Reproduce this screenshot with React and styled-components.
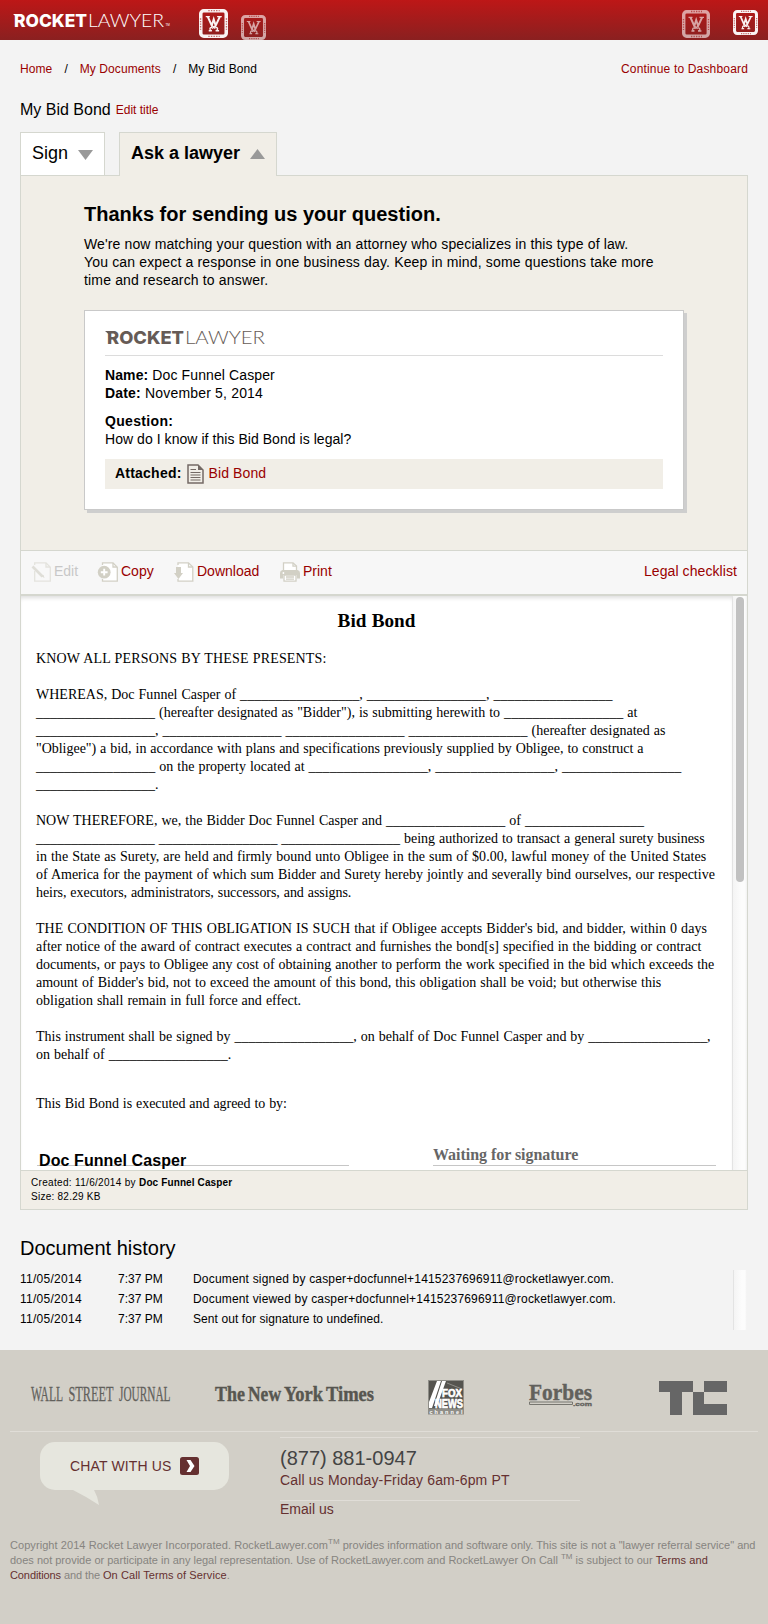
import React from "react";
import styled, { createGlobalStyle } from "styled-components";

const sans = `"Liberation Sans", Arial, Helvetica, sans-serif`;
const serif = `"Liberation Serif", "Times New Roman", serif`;

const Global = createGlobalStyle`
  * { box-sizing: border-box; }
  body { margin: 0; background: #f3f3f3; color: #000; font: 14px/18px ${sans}; }
  h1, h2, p, ul, dl, dd { margin: 0; padding: 0; }
  a { color: #990000; text-decoration: none; }
  svg { display: block; flex: none; overflow: visible; }
`;

const Page = styled.div`
  width: 768px;
  min-height: 1624px;
  display: flex;
  flex-direction: column;
`;

const Header = styled.header`
  height: 40px;
  display: flex;
  align-items: flex-start;
  background: linear-gradient(#bd1717, #8a2020);
`;

const HeaderLogo = styled.div`
  margin: 11px 0 0 13px;
  width: 186px;
`;

const EmblemBox = styled.div`
  margin-top: ${(p) => p.$top}px;
  margin-left: ${(p) => p.$left};
  margin-right: ${(p) => p.$right || 0}px;
  opacity: ${(p) => (p.$faded ? 0.6 : 0.95)};
`;

const Main = styled.main`
  margin: 0 20px;
`;

const Breadcrumbs = styled.nav`
  display: flex;
  margin-top: 20px;
  font-size: 12px;
  line-height: 18px;
  letter-spacing: 0.08px;
  span { margin: 0 11.8px 0 12.2px; }
`;

const DashboardLink = styled.a`
  margin-left: auto;
  letter-spacing: 0.17px;
`;

const TitleRow = styled.div`
  display: flex;
  align-items: baseline;
  gap: 5px;
  height: 20px;
  margin-top: 22px;
  font-size: 16px;
  line-height: 20px;
  a { font-size: 12px; position: relative; top: -1px; }
`;

const Tabs = styled.div`
  display: flex;
  gap: 14px;
  height: 43px;
  margin-top: 12px;
`;

const Tab = styled.div`
  display: flex;
  justify-content: space-between;
  position: relative;
  width: ${(p) => p.$width}px;
  height: ${(p) => (p.$active ? 44 : 43)}px;
  padding: 9px 11px 0;
  border: 1px solid #d5d7cf;
  border-bottom: 0;
  background: ${(p) => (p.$active ? "#f1eee7" : "#fff")};
  font-size: 18px;
  line-height: 22px;
  font-weight: ${(p) => (p.$active ? "bold" : "normal")};
  svg { margin-top: ${(p) => (p.$active ? 7 : 8)}px; }
`;

const Panel = styled.section`
  border: 1px solid #d5d7cf;
`;

const Confirmation = styled.div`
  height: 374px;
  padding: 26px 63px 0;
  background: #f1eee7;
`;

const Message = styled.p`
  margin-top: 9px;
`;

const Heading = styled.h1`
  font-size: 20px;
  line-height: 24px;
  font-weight: bold;
`;

const Card = styled.article`
  width: 600px;
  height: 200px;
  margin-top: 21px;
  padding: 17px 20px 0;
  border: 1px solid #c9c9c9;
  background: #fff;
  box-shadow: 3px 3px 0 #cecece;
`;

const CardLogo = styled.div`
  height: 28px;
  border-bottom: 1px solid #dcdcdc;
`;

const Fields = styled.div`
  padding-top: 10px;
`;

const Attachment = styled.div`
  display: flex;
  align-items: center;
  height: 30px;
  margin-top: 11px;
  padding: 0 10px 2px;
  background: #f1eee7;
  letter-spacing: 0.1px;
  b { letter-spacing: 0.22px; }
  svg { margin: 2px 5px 0 5px; }
`;

const Toolbar = styled.div`
  display: flex;
  align-items: center;
  height: 46px;
  padding: 0 10px 4px;
  border-top: 1px solid #d5d7cf;
  border-bottom: 2px solid #d5d7cf;
  background: #f7f7f7;
`;

const Tool = styled.a`
  display: flex;
  align-items: center;
  gap: 3px;
  width: ${(p) => p.$width}px;
  opacity: ${(p) => (p.$disabled ? 0.5 : 1)};
  color: ${(p) => (p.$disabled ? "#999" : "#990000")};
  svg { margin-top: 3px; }
`;

const ChecklistLink = styled.a`
  margin-left: auto;
  letter-spacing: 0.08px;
`;

const DocumentView = styled.div`
  display: flex;
  height: 574px;
  overflow: hidden;
  background: #fff;
`;

const Sheet = styled.div`
  width: 711px;
  padding: 13px 15px 0;
  box-shadow: inset 0 4px 4px -2px #ddd;
  font-family: ${serif};
  word-spacing: 0.5px;
`;

const SheetTitle = styled.h2`
  font-size: 19.2px;
  line-height: 24px;
  font-weight: bold;
  text-align: center;
  margin: 0 0 17px;
`;

const Clause = styled.p`
  margin-bottom: ${(p) => p.$after ?? 18}px;
`;

const Line = styled.span`
  display: block;
  white-space: nowrap;
  letter-spacing: ${(p) => p.$track || 0}px;
`;

const Tracked = styled.span`
  letter-spacing: ${(p) => p.$track}px;
`;

const Signatures = styled.div`
  display: flex;
  justify-content: space-between;
  margin: 0 1px;
`;

const Signature = styled.div`
  display: flex;
  align-items: flex-end;
  width: ${(p) => p.$width}px;
  height: 53px;
  border-bottom: 1px solid #c6c6c6;
  font-size: 16px;
  line-height: 18px;
  font-weight: bold;
  word-spacing: 0;
`;

const SignedName = styled.span`
  margin: 0 0 -5px 2px;
  font-family: ${sans};
  letter-spacing: 0.09px;
`;

const Pending = styled.span`
  margin-bottom: 1px;
  color: #666;
  letter-spacing: -0.04px;
`;

const Track = styled.div`
  width: ${(p) => p.$width}px;
  height: ${(p) => p.$height};
  padding: 1px 0 0 3px;
  border-left: 1px solid #e3e3e3;
  background: linear-gradient(90deg, #f4f4f4, #fcfcfc 60%, #fcfcfc 85%, #f1f1f1);
`;

const Thumb = styled.div`
  width: 8px;
  height: 285px;
  border-radius: 4px;
  background: #c1c1c1;
`;

const FileInfo = styled.div`
  height: 39px;
  padding: 5px 10px 0;
  border-top: 1px solid #d5d7cf;
  background: #f1eee7;
  font-size: 10px;
  line-height: 14px;
`;

const HistoryTitle = styled.h2`
  margin: 26px 0 10px;
  font-size: 20px;
  line-height: 24px;
  font-weight: normal;
`;

const History = styled.div`
  display: flex;
  justify-content: space-between;
  height: 60px;
  margin-right: 1px;
  font-size: 12px;
`;

const HistoryRow = styled.div`
  display: grid;
  grid-template-columns: 98px 75px auto;
  height: 20px;
  line-height: 18px;
  white-space: nowrap;
`;

const Footer = styled.footer`
  flex: 1;
  margin-top: 20px;
  padding: 0 10px;
  background: #d2cfc7;
  color: #868480;
  a { color: #653030; }
`;

const Press = styled.div`
  display: flex;
  align-items: flex-start;
  height: 82px;
  padding: 29px 0 0 20px;
  border-bottom: 1px solid #e0ddd7;
`;

const PressLogo = styled.div`
  width: ${(p) => p.$width}px;
`;

const Contact = styled.div`
  display: flex;
  height: 94px;
  padding: 5px 0 0 30px;
`;

const Chat = styled.div`
  position: relative;
  display: flex;
  align-items: center;
  width: 189px;
  height: 48px;
  margin: 5px 51px 0 0;
  padding: 0 30px 0;
  gap: 8px;
  border-radius: 15px;
  background: #e6e6de;
  color: #653030;
  letter-spacing: 0.15px;
  white-space: nowrap;
`;

const Tail = styled.svg`
  position: absolute;
  left: 33px;
  top: 48px;
`;

const ContactInfo = styled.div`
  width: 300px;
  border-top: 1px solid #e0ddd7;
  line-height: 18px;
`;

const Phone = styled.div`
  margin-top: 8px;
  color: #444;
  font-size: 20px;
  line-height: 24px;
`;

const CallHours = styled.div`
  height: 31px;
  margin-bottom: -1px;
  padding-top: 1px;
  border-bottom: 1px solid #e0ddd7;
  letter-spacing: 0.15px;
`;

const Legal = styled.p`
  margin: 12px 0 0;
  font-size: 11px;
  line-height: 15px;
  sup { font-size: 8px; line-height: 0; vertical-align: 5px; }
`;

function Wordmark({ color, left = 1, trademark, boldWidth, lightWidth }) {
  return (
    <svg width="166" height="20" fill={color}>
      <path d="M0 3h5v3H3.5z" />
      <text x={left + 1} y="16" fontFamily="Inter" fontWeight="800" fontSize="18" textLength={boldWidth} lengthAdjust="spacingAndGlyphs">ROCKET</text>
      <text x={left + boldWidth + 2} y="16" fontFamily="Lato" fontWeight="300" fontSize="18.2" textLength={lightWidth} lengthAdjust="spacingAndGlyphs">LAWYER</text>
      {trademark && <text x="152.5" y="15" fontFamily="Liberation Sans" fontSize="3">TM</text>}
    </svg>
  );
}

function Emblem({ size }) {
  return (
    <svg width={size} height={size} viewBox="0 0 28 28" fill="none" stroke="#fff">
      <rect x="1.7" y="1.7" width="24.6" height="24.6" rx="3" strokeWidth="3.4" />
      <path d="M9 1.5h11M9 26.5h11M1.5 9v11M26.5 9v11" stroke="#a51b1b" strokeWidth="1.3" strokeDasharray="1.3 1.2" opacity=".65" />
      <path d="M6.5 7.3h4M17.5 7.3h4.5" strokeWidth="1.2" />
      <path d="M8.500 7.500l3.800 8.500 1.900-6 1.900 6 4-8.500" strokeWidth="1.9" />
      <path d="M12.400 16l3.200 2.800M16.200 16l-3.600 2.800M12.500 17.800c-2.600 0-2.600 3 0 3.200M16 17.800c2.600 0 2.600 3 0 3.200M9.400 21h2.400M16.800 21h2.600" strokeWidth="1.3" />
    </svg>
  );
}

const Arrow = ({ up }) => (
  <svg width="15" height="10" fill="#999"><path d={up ? "M0 10h15L7.5 0z" : "M0 0h15L7.5 10z"} /></svg>
);

const FileIcon = () => (
  <svg width="17" height="20" fill="none" stroke="#746a65">
    <path d="M1 1h10l5 5v13H1z" fill="#f1eee7" strokeWidth="1.5" />
    <path d="M11 1v5h5z" fill="#746a65" stroke="none" />
    <path d="M3.5 5.5H9M3.5 8.5h10M3.5 11h10M3.5 13.5h10M3.5 16h10" strokeWidth="1.2" />
  </svg>
);

function ToolIcon({ kind }) {
  return (
    <svg width="20" height="20" fill="none" stroke="#d2d0c5" strokeWidth="1.3">
      {kind === "edit" && <><path d="M3.7 3V.8H15l4.3 4.4v14H3.7V9" fill="#fafafa" /><path d="M15 1v4h4" /><path d="M1.5 4.5l10 10" stroke="#c8c6ba" strokeWidth="2.6" /><path d="M10.5 14.5l3 1.5-1-3.2z" fill="#c8c6ba" stroke="none" /></>}
      {kind === "copy" && <><path d="M4.5 3V.8H15l4.3 4.4v14H4.5V17" fill="#fff" /><path d="M15 1v4h4" /><circle cx="6.2" cy="10.2" r="6.4" fill="#d2d0c5" stroke="none" /><path d="M6.2 6.8v6.8M2.8 10.2h6.8" stroke="#fff" strokeWidth="1.9" /></>}
      {kind === "download" && <><path d="M4 3V.8h10.5L18.8 5v14.2H4V17" fill="#fff" /><path d="M14.5 1v4h4" /><path d="M2 5h5v6h2l-4.5 6L0 11h2z" fill="#d2d0c5" stroke="none" /></>}
      {kind === "print" && <><path d="M3.5 9V.8H13L16.5 4v5" fill="#fff" /><path d="M13 1v3.2h3.5" /><path d="M2.5 8h15Q20 8.500 20 11v5.500h-3V13H3v3.500H0V11Q0 8.500 2.500 8z" fill="#d2d0c5" stroke="none" /><circle cx="3.4" cy="11" r=".9" fill="#fff" stroke="none" /><path d="M4 13h12v6.200H4z" fill="#fff" /><path d="M6 15h8M6 17.200h8" /></>}
    </svg>
  );
}

const B = "_".repeat(17);

const clauses = [
  { lines: [["KNOW ALL PERSONS BY THESE PRESENTS:", 0.15]] },
  { lines: [
    [`WHEREAS, Doc Funnel Casper of ${B}, ${B}, ${B}`, 0.007],
    [`${B} (hereafter designated as "Bidder"), is submitting herewith to ${B} at`, 0.005],
    [`${B}, ${B} ${B} ${B} (hereafter designated as`],
    [`"Obligee") a bid, in accordance with plans and specifications previously supplied by Obligee, to construct a`, -0.026],
    [`${B} on the property located at ${B}, ${B}, ${B}`, 0.012],
    [`${B}.`],
  ] },
  { lines: [
    [`NOW THEREFORE, we, the Bidder Doc Funnel Casper and ${B} of ${B}`, 0.008],
    [`${B} ${B} ${B} being authorized to transact a general surety business`, -0.018],
    ["in the State as Surety, are held and firmly bound unto Obligee in the sum of $0.00, lawful money of the United States", 0.022],
    ["of America for the payment of which sum Bidder and Surety hereby jointly and severally bind ourselves, our respective"],
    ["heirs, executors, administrators, successors, and assigns.", -0.05],
  ] },
  { lines: [
    ["THE CONDITION OF THIS OBLIGATION IS SUCH that if Obligee accepts Bidder's bid, and bidder, within 0 days", 0.046],
    ["after notice of the award of contract executes a contract and furnishes the bond[s] specified in the bidding or contract", 0.007],
    ["documents, or pays to Obligee any cost of obtaining another to perform the work specified in the bid which exceeds the", -0.014],
    ["amount of Bidder's bid, not to exceed the amount of this bond, this obligation shall be void; but otherwise this"],
    ["obligation shall remain in full force and effect.", 0.012],
  ] },
  { after: 31, lines: [
    [`This instrument shall be signed by ${B}, on behalf of Doc Funnel Casper and by ${B},`, -0.012],
    [`on behalf of ${B}.`],
  ] },
  { after: 0, lines: [["This Bid Bond is executed and agreed to by:", -0.045]] },
];

const events = [
  ["Document signed by casper+docfunnel+1415237696911@rocketlawyer.com.", 0.18],
  ["Document viewed by casper+docfunnel+1415237696911@rocketlawyer.com.", 0.18],
  ["Sent out for signature to undefined.", 0.08],
];

function PressLogos() {
  return (
    <Press>
      <PressLogo $width={184}>
        <svg width="142" height="36" fill="#62615c" stroke="#62615c" strokeWidth=".3" fontFamily="Liberation Serif" fontSize="21.5">
          <text x="1" y="22" textLength="32" lengthAdjust="spacingAndGlyphs">WALL</text>
          <text x="38.500" y="22" textLength="45" lengthAdjust="spacingAndGlyphs">STREET</text>
          <text x="89" y="22" textLength="51.500" lengthAdjust="spacingAndGlyphs">JOURNAL</text>
        </svg>
      </PressLogo>
      <PressLogo $width={214}>
        <svg width="162" height="36" fill="#575650" stroke="#575650" strokeWidth=".4" fontFamily="Liberation Serif" fontWeight="bold" fontSize="21">
          <text x="1" y="22" textLength="30" lengthAdjust="spacingAndGlyphs">The</text>
          <text x="34" y="22" textLength="33" lengthAdjust="spacingAndGlyphs">New</text>
          <text x="70" y="22" textLength="39" lengthAdjust="spacingAndGlyphs">York</text>
          <text x="112" y="22" textLength="48" lengthAdjust="spacingAndGlyphs">Times</text>
        </svg>
      </PressLogo>
      <PressLogo $width={101}>
        <svg width="36" height="36" fontFamily="Liberation Sans" fontWeight="bold">
          <path d="M0 1h36v34.500H0z" fill="#8f8e88" />
          <path d="M1 2h34v27.500H1z" fill="#55544f" />
          <path d="M1 23L9 2h4L4 29H1zM6 27L14 2h4L9 27z" fill="#fff" />
          <path d="M19 4l15 6" stroke="#8f8e88" />
          <g fill="#fff" stroke="#fff" strokeWidth=".7">
            <text x="14" y="18" fontSize="11.500" textLength="20" lengthAdjust="spacingAndGlyphs">FOX</text>
            <text x="7" y="28.500" fontSize="12" textLength="28" lengthAdjust="spacingAndGlyphs">NEWS</text>
          </g>
          <text x="1.500" y="34.500" fontSize="5.500" fill="#fff" textLength="33" lengthAdjust="spacing">channel</text>
        </svg>
      </PressLogo>
      <PressLogo $width={130}>
        <svg width="64" height="36" fill="#62615c" fontWeight="bold">
          <text x="0" y="21" fontFamily="Liberation Serif" fontSize="23" textLength="63" lengthAdjust="spacingAndGlyphs" stroke="#62615c" strokeWidth=".4">Forbes</text>
          <path d="M.5 23h43v2.500H.5z" fill="none" stroke="#777670" />
          <text x="44" y="26.500" fontFamily="Liberation Sans" fontSize="6" textLength="19" lengthAdjust="spacingAndGlyphs" stroke="#62615c" strokeWidth=".3">.com</text>
        </svg>
      </PressLogo>
      <svg width="68" height="36" fill="#666">
        <path d="M0 2h34v11H23v23H11V13H0zM45 2h23v11H45zM34 13h11v12h23v11H34z" />
      </svg>
    </Press>
  );
}

export default function App() {
  return (
    <Page>
      <Global />
      <Header>
        <HeaderLogo><Wordmark color="#fff" left={0} boldWidth={73} lightWidth={76} trademark /></HeaderLogo>
        <EmblemBox $top={9} $left="0"><Emblem size={29} /></EmblemBox>
        <EmblemBox $top={15} $left="13px" $faded><Emblem size={25} /></EmblemBox>
        <EmblemBox $top={10} $left="auto" $faded><Emblem size={28} /></EmblemBox>
        <EmblemBox $top={10} $left="23px" $right={10}><Emblem size={25} /></EmblemBox>
      </Header>

      <Main>
        <Breadcrumbs>
          <a href="#home">Home</a><span>/</span>
          <a href="#documents">My Documents</a><span>/</span>
          My Bid Bond
          <DashboardLink href="#dashboard">Continue to Dashboard</DashboardLink>
        </Breadcrumbs>
        <TitleRow>My Bid Bond<a href="#edit-title">Edit title</a></TitleRow>

        <Tabs>
          <Tab $width={85}>Sign<Arrow /></Tab>
          <Tab $width={158} $active>Ask a lawyer<Arrow up /></Tab>
        </Tabs>

        <Panel>
          <Confirmation>
            <Heading>Thanks for sending us your question.</Heading>
            <Message>
              <Line $track={0.13}>We're now matching your question with an attorney who specializes in this type of law.</Line>
              <Line $track={0.157}>You can expect a response in one business day. Keep in mind, some questions take more</Line>
              <Line $track={0.16}>time and research to answer.</Line>
            </Message>
            <Card>
              <CardLogo><Wordmark color="#665b56" boldWidth={77} lightWidth={80} /></CardLogo>
              <Fields>
                <Line $track={0.11}><b>Name:</b> Doc Funnel Casper</Line>
                <Line $track={0.18}><b>Date:</b> November 5, 2014</Line>
              </Fields>
              <Fields>
                <Line $track={0.33}><b>Question:</b></Line>
                <Line $track={0.05}>How do I know if this Bid Bond is legal?</Line>
              </Fields>
              <Attachment><b>Attached:</b><FileIcon /><a href="#bid-bond">Bid Bond</a></Attachment>
            </Card>
          </Confirmation>

          <Toolbar>
            <Tool $width={67} $disabled><ToolIcon kind="edit" />Edit</Tool>
            <Tool $width={76} href="#copy"><ToolIcon kind="copy" />Copy</Tool>
            <Tool $width={106} href="#download"><ToolIcon kind="download" />Download</Tool>
            <Tool $width={60} href="#print"><ToolIcon kind="print" />Print</Tool>
            <ChecklistLink href="#checklist">Legal checklist</ChecklistLink>
          </Toolbar>

          <DocumentView>
            <Sheet>
              <SheetTitle>Bid Bond</SheetTitle>
              {clauses.map((c, i) => (
                <Clause key={i} $after={c.after}>
                  {c.lines.map(([text, track], j) => <Line key={j} $track={track}>{text}</Line>)}
                </Clause>
              ))}
              <Signatures>
                <Signature $width={312}><SignedName>Doc Funnel Casper</SignedName></Signature>
                <Signature $width={283}><Pending>Waiting for signature</Pending></Signature>
              </Signatures>
            </Sheet>
            <Track $width={15} $height="574px"><Thumb /></Track>
          </DocumentView>

          <FileInfo>
            <Line $track={0.32}>Created: 11/6/2014 by <Tracked as="b" $track={0.12}>Doc Funnel Casper</Tracked></Line>
            <Line $track={0.25}>Size: 82.29 KB</Line>
          </FileInfo>
        </Panel>

        <HistoryTitle>Document history</HistoryTitle>
        <History>
          <div>
            {events.map(([text, track]) => (
              <HistoryRow key={text}>
                <Tracked $track={0.27}>11/05/2014</Tracked><span>7:37 PM</span><Tracked $track={track}>{text}</Tracked>
              </HistoryRow>
            ))}
          </div>
          <Track $width={14} $height="60px" />
        </History>
      </Main>

      <Footer>
        <PressLogos />
        <Contact>
          <Chat>
            CHAT WITH US
            <svg width="19" height="18"><rect width="19" height="18" rx="2.5" fill="#653030" /><path d="M6.500 3h4l4 6-4 6h-4l3.500-6z" fill="#fff" /></svg>
            <Tail width="27" height="16" fill="#e6e6de"><path d="M0 0h21q4 7 5 15Q14 7 0 0z" /></Tail>
          </Chat>
          <ContactInfo>
            <Phone>(877) 881-0947</Phone>
            <CallHours><a href="#call">Call us Monday-Friday 6am-6pm PT</a></CallHours>
            <a href="#email">Email us</a>
          </ContactInfo>
        </Contact>
        <Legal>
          <Line>
            <Tracked $track={0.065}>Copyright 2014 Rocket Lawyer Incorporated. RocketLawyer.com</Tracked><sup>TM</sup> provides information and software only. This site is not a "lawyer referral service" and
          </Line>
          <Line>
            does not provide or participate in any legal representation. Use of RocketLawyer.com and RocketLawyer On Call <sup>TM</sup> is subject to our <Tracked as="a" $track={0.1} href="#terms">Terms and</Tracked>
          </Line>
          <Line $track={-0.1}>
            <a href="#terms">Conditions</a> and the <Tracked as="a" $track={0.1} href="#on-call">On Call Terms of Service</Tracked>.
          </Line>
        </Legal>
      </Footer>
    </Page>
  );
}
